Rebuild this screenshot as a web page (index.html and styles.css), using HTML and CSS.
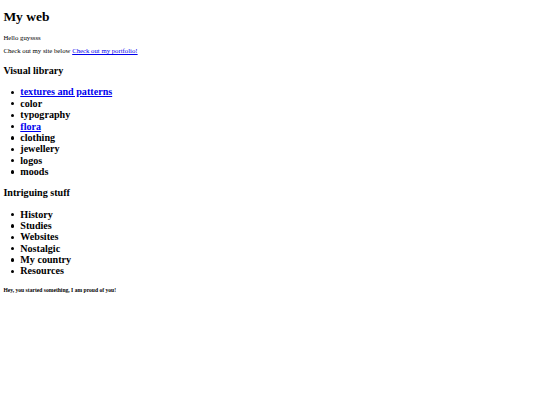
FILE: index.html
```html
<!DOCTYPE html>
<html>
<head>
<meta charset="utf-8">
<title>My web</title>
<link rel="stylesheet" href="styles.css">
</head>
<body class="page">
<h1 class="title">My web</h1>
<p class="text">Hello guyssss</p>
<p class="text">Check out my site below <a class="link" href="#">Check out my portfolio!</a></p>
<h2 class="heading">Visual library</h2>
<ul class="list">
<li class="item"><a class="link" href="#">textures and patterns</a></li>
<li class="item">color</li>
<li class="item">typography</li>
<li class="item"><a class="link" href="#">flora</a></li>
<li class="item">clothing</li>
<li class="item">jewellery</li>
<li class="item">logos</li>
<li class="item">moods</li>
</ul>
<h2 class="heading">Intriguing stuff</h2>
<ul class="list">
<li class="item">History</li>
<li class="item">Studies</li>
<li class="item">Websites</li>
<li class="item">Nostalgic</li>
<li class="item">My country</li>
<li class="item">Resources</li>
</ul>
<h5 class="note">Hey, you started something, I am proud of you!</h5>
</body>
</html>
```
FILE: styles.css
```css
html {
  background: #ffffff;
}
.page {
  margin: 3.375px;
  font-family: "Liberation Serif", "Times New Roman", serif;
  font-size: 6.75px;
  line-height: 7.76px;
  color: #000000;
}
.title {
  font-size: 13.5px;
  line-height: 15.5px;
  font-weight: bold;
  margin: 5.75px 0 9.35px;
}
.text {
  margin: 5.75px 0;
}
.heading {
  font-size: 10.125px;
  line-height: 11.63px;
  font-weight: bold;
  margin: 10px 0 9.6px;
}
.list {
  margin: 9.6px 0 8px;
  padding-left: 7.6px;
  list-style: none;
}
.item {
  display: flex;
  align-items: center;
  font-size: 10.125px;
  line-height: 11.36px;
  font-weight: bold;
}
.item::before {
  content: "";
  flex: none;
  width: 3.3px;
  height: 3.3px;
  border-radius: 50%;
  background: #000000;
  margin: 0.6px 6px 0 0;
}
.link {
  color: #0000ee;
  text-decoration: underline;
}
.note {
  font-size: 5.6px;
  line-height: 6.45px;
  font-weight: bold;
  margin: 10.1px 0 9px;
}
```
